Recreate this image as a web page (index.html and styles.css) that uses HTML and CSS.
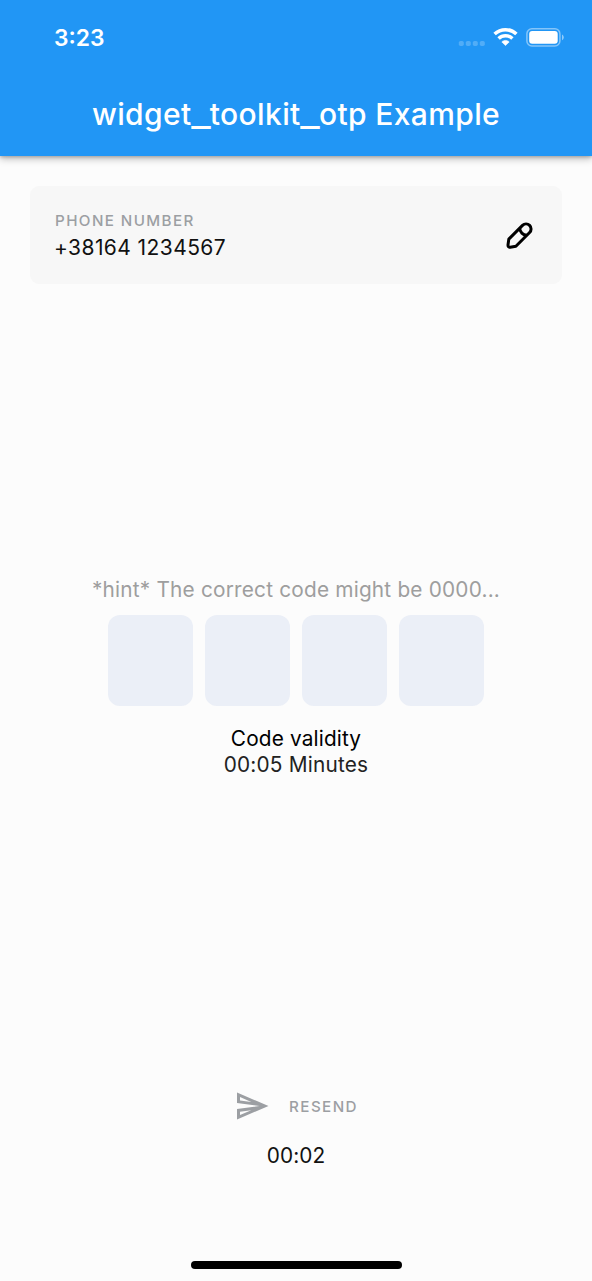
FILE: index.html
```html
<!DOCTYPE html>
<html lang="en">
<head>
<meta charset="utf-8">
<title>widget_toolkit_otp Example</title>
<link rel="stylesheet" href="styles.css">
</head>
<body>
<div class="screen">
  <header class="app-bar">
    <div class="status-bar">
      <span class="clock">3:23</span>
      <svg class="status-icons" width="106" height="22" viewBox="0 0 106 22">
        <g fill="#fff" fill-opacity=".22">
          <rect x="0.8" y="13.9" width="5" height="5" rx="1.7"/>
          <rect x="7.8" y="13.9" width="5" height="5" rx="1.7"/>
          <rect x="14.8" y="13.9" width="5" height="5" rx="1.7"/>
          <rect x="21.8" y="13.9" width="5" height="5" rx="1.7"/>
        </g>
        <g fill="none" stroke="#fff" stroke-width="3.5">
          <path d="M36.6 7.1C42.7 1.2 52.3 1.2 58.4 7.1"/>
          <path d="M40.6 11.4C44.5 7.700 50.5 7.700 54.4 11.4"/>
        </g>
        <path d="M47.5 18.600L43.800 14.900C45.900 12.900 49.100 12.900 51.200 14.900Z" fill="#fff" stroke="#fff" stroke-width=".6" stroke-linejoin="round"/>
        <rect x="68.9" y="1.7" width="33" height="17.200" rx="5" fill="none" stroke="#fff" stroke-opacity=".45" stroke-width="1.5"/>
        <rect x="71.2" y="4" width="28.5" height="12.7" rx="3" fill="#fff"/>
        <path d="M104 7.400c2.300 1 2.300 4.900 0 5.900z" fill="#fff" fill-opacity=".5"/>
      </svg>
    </div>
    <h1 class="title">widget<span class="underscore">_</span>toolkit<span class="underscore">_</span>otp Example</h1>
  </header>

  <section class="phone-card">
    <div class="phone-info">
      <div class="phone-label">PHONE NUMBER</div>
      <div class="phone-value">+38164 1234567</div>
    </div>
    <svg class="edit-icon" width="30" height="30" viewBox="0 0 30 30">
      <g fill="none" stroke="#000" stroke-width="3" stroke-linejoin="round">
        <path d="M4.800 19.100L18.500 5.400A4.700 4.700 0 0 1 25.600 12.500L11.900 26.200L6.200 27.200Q3.900 27.300 4 25Z"/>
        <path d="M15.700 8.200A7.300 7.300 0 0 0 22.800 15.300"/>
      </g>
    </svg>
  </section>

  <main class="otp">
    <p class="hint">*hint* The correct code might be 0000...</p>
    <div class="code-fields">
      <span class="field"></span><span class="field"></span><span class="field"></span><span class="field"></span>
    </div>
    <p class="validity-label">Code validity</p>
    <p class="validity-time">00:05 Minutes</p>
  </main>

  <footer class="resend">
    <div class="resend-button">
      <svg width="36" height="36" viewBox="0 0 24 24"><path fill="#9c9fa3" d="M4.010 6.030l7.510 3.220-7.520-1 .01-2.220m7.500 8.720L4 17.970v-2.220l7.510-1M2.010 3L2 10l15 2-15 2 .01 7L23 12 2.010 3z"/></svg>
      <span class="resend-label">RESEND</span>
    </div>
    <div class="resend-time">00:02</div>
  </footer>
  <div class="home-indicator"></div>
</div>
</body>
</html>
```

FILE: styles.css
```css
* { box-sizing: border-box; }
body { margin: 0; background: #fcfcfc; font-family: Inter, "Liberation Sans", sans-serif; color: #111; }
h1, p { margin: 0; font-weight: 400; }
.screen { width: 592px; height: 1281px; display: flex; flex-direction: column; align-items: center; overflow: hidden; }
.app-bar { width: 100%; height: 156px; flex: none; background: #2196f5; color: #fff; box-shadow: 0 3px 7px rgba(0,0,0,.25), 0 1px 3px rgba(0,0,0,.2); }
.status-bar { height: 72px; padding: 27px 28px 0 54px; display: flex; justify-content: space-between; align-items: flex-start; }
.clock { font-size: 22.8px; line-height: 22px; font-weight: 600; letter-spacing: 0; }
.status-icons { display: block; }
.title { font-size: 30px; line-height: 84px; font-weight: 500; letter-spacing: .37px; text-align: center; white-space: nowrap; }
.underscore { display: inline-block; margin: 0 2px; transform: scale(1.4, 1.1); }
.phone-card { width: 532px; height: 98px; flex: none; margin-top: 30px; padding: 0 28px 0 25px; display: flex; align-items: center; justify-content: space-between; background: #f7f7f7; border-radius: 9px; }
.phone-label { font-size: 15.2px; line-height: 24px; font-weight: 550; letter-spacing: 1.4px; color: #9c9fa3; }
.phone-value { font-size: 21px; line-height: 26px; padding-top: 2px; letter-spacing: .42px; margin-left: -1px; }
.edit-icon { display: block; }
.otp { display: flex; flex-direction: column; align-items: center; margin-top: 292px; white-space: nowrap; }
.hint { font-size: 20.8px; line-height: 28px; letter-spacing: .2px; color: #9e9e9e; }
.code-fields { display: flex; gap: 12px; margin: 11px 0 20px; }
.field { width: 85.2px; height: 90.5px; border-radius: 12px; background: #ebeff7; }
.validity-label { font-size: 20.8px; line-height: 26px; letter-spacing: .15px; color: #000; }
.validity-time { font-size: 20.8px; line-height: 26px; letter-spacing: .2px; color: #222; }
.resend { margin-top: 310.5px; display: flex; flex-direction: column; align-items: center; }
.resend-button { display: flex; align-items: center; gap: 19px; height: 36px; }
.resend-label { font-size: 15.2px; line-height: 20px; padding-top: 2px; font-weight: 550; letter-spacing: 1.4px; color: #9c9fa3; }
.resend-time { font-size: 20.8px; line-height: 28px; margin-top: 18px; letter-spacing: .1px; }
.home-indicator { width: 211px; height: 8px; margin: auto 0 12px; border-radius: 4px; background: #000; }
```
